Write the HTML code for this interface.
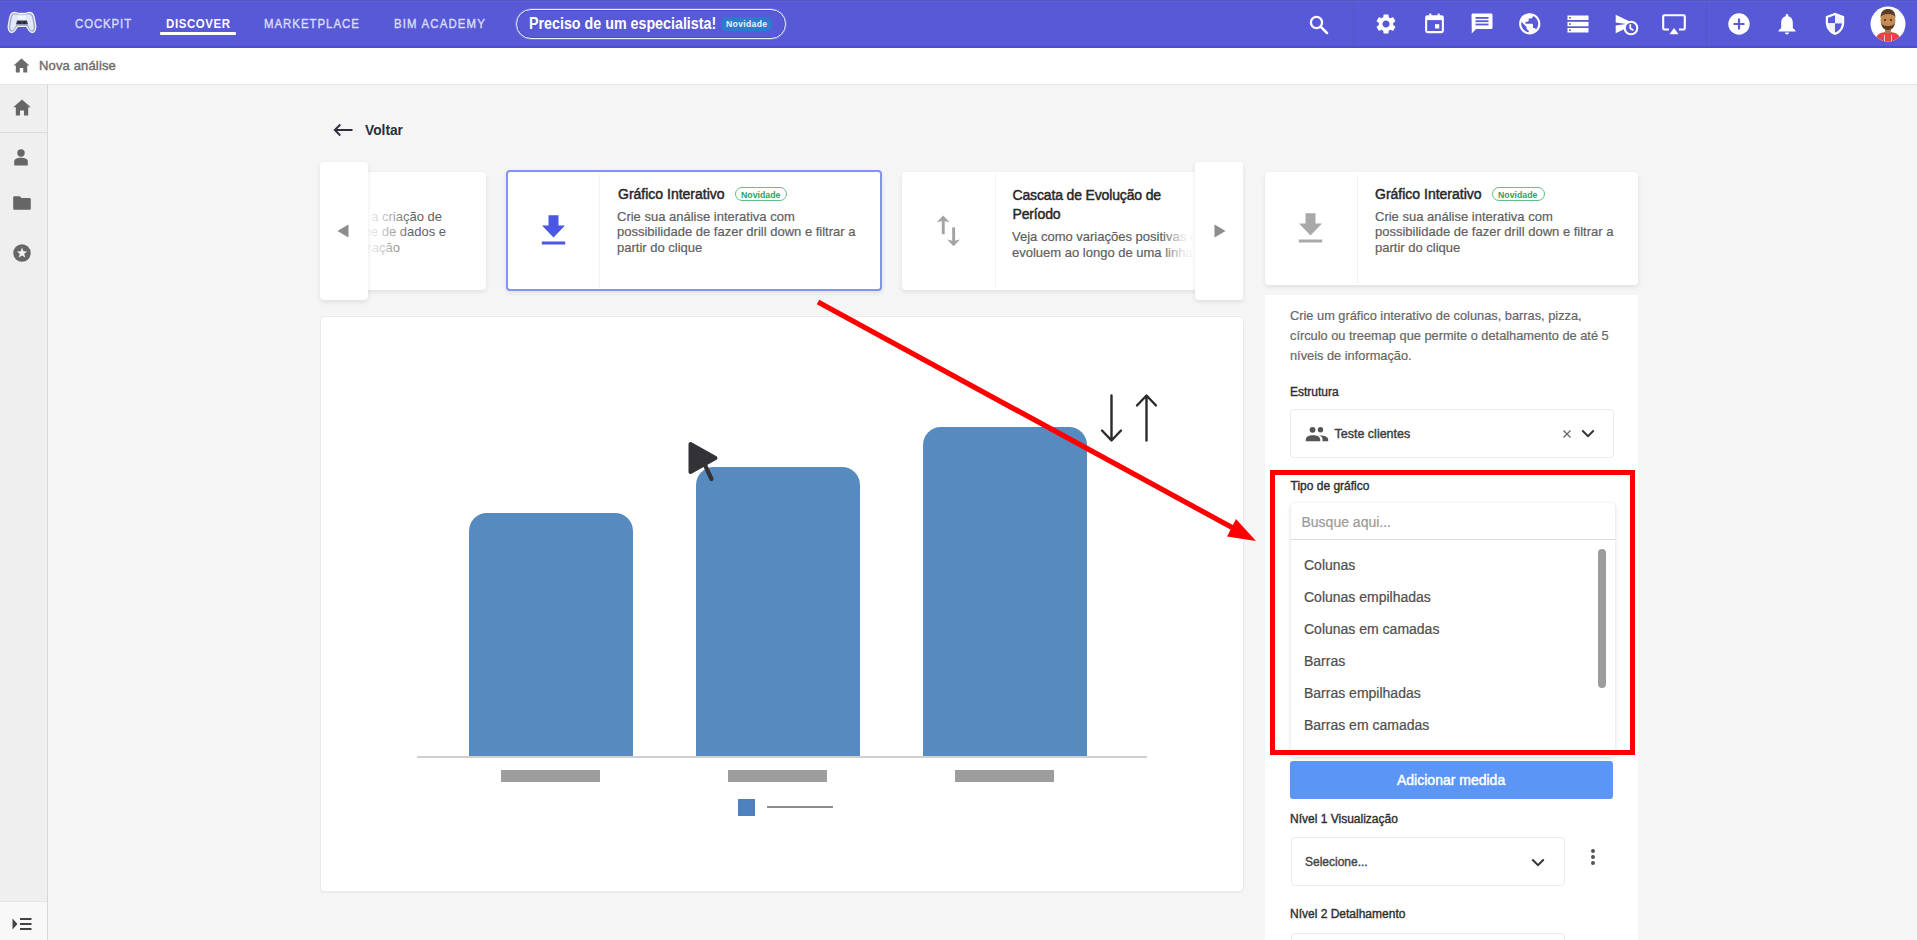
<!DOCTYPE html><html><head><meta charset="utf-8"><style>
html,body{margin:0;padding:0;width:1917px;height:940px;overflow:hidden;background:#f5f5f5;font-family:"Liberation Sans",sans-serif;}
.a{position:absolute;box-sizing:border-box;}
.t{white-space:nowrap;line-height:normal;}
svg{position:absolute;overflow:visible;}
</style></head><body>

<div class="a" style="left:0px;top:0px;width:1917px;height:48px;background:#5759d6;border-bottom:2px solid #4b4dcc;"></div>
<div class="a" style="left:0px;top:0px;width:1917px;height:1px;background:#5559bb;"></div>
<div class="a" style="left:0px;top:1px;width:1917px;height:1px;background:#5a60e4;"></div>
<div class="a" style="left:1353px;top:2px;width:1px;height:44px;background:#5456c2;"></div>
<div class="a" style="left:1706px;top:2px;width:1px;height:44px;background:#5456c2;"></div>
<svg style="left:7px;top:11px" width="30" height="23" viewBox="0 0 30 23">
<path d="M8 1.5 C5.5 1.5 3.8 3 3 5.5 L1.3 14.5 C0.8 18 2.2 21.5 4.8 21.5 C6.8 21.5 7.8 20 9 17.8 L10.5 15.3 L19.5 15.3 L21 17.8 C22.2 20 23.2 21.5 25.2 21.5 C27.8 21.5 29.2 18 28.7 14.5 L27 5.5 C26.2 3 24.5 1.5 22 1.5 C20.3 1.5 19.5 2.5 18 2.5 L12 2.5 C10.5 2.5 9.7 1.5 8 1.5 Z" fill="#9ba3c4" stroke="#eef0f6" stroke-width="1.3"/>
<path d="M8 3.5 C6.3 3.5 5.3 4.6 4.8 6.5 L3.3 14.8 C3 17.3 3.8 19.5 5 19.5 C6.2 19.5 7 18.3 8 16.6 L9.6 13.3 L20.4 13.3 L22 16.6 C23 18.3 23.8 19.5 25 19.5 C26.2 19.5 27 17.3 26.7 14.8 L25.2 6.5 C24.7 4.6 23.7 3.5 22 3.5 Z" fill="#e4e8fb"/>
<rect x="11.5" y="5" width="7" height="3.5" fill="#f5f7ff"/>
<path d="M10 9.5 L20 9.5 L21 13.3 L9 13.3 Z" fill="#3d4160"/>
<circle cx="12.5" cy="11.5" r="1.6" fill="#26293d"/><circle cx="17.5" cy="11.5" r="1.6" fill="#26293d"/>
</svg>
<div class="a t" style="left:75px;top:16.23px;font-size:13px;font-weight:normal;color:rgba(235,238,255,0.82);letter-spacing:1.0px;-webkit-text-stroke:0.42px rgba(235,238,255,0.82);transform:scaleX(0.88);transform-origin:0 0;">COCKPIT</div>
<div class="a t" style="left:166px;top:15.73px;font-size:13px;font-weight:bold;color:#ffffff;letter-spacing:0.7px;transform:scaleX(0.88);transform-origin:0 0;">DISCOVER</div>
<div class="a" style="left:160px;top:32px;width:76px;height:3px;background:#ffffff;border-radius:1px;"></div>
<div class="a t" style="left:264px;top:16.23px;font-size:13px;font-weight:normal;color:rgba(235,238,255,0.82);letter-spacing:1.1px;-webkit-text-stroke:0.42px rgba(235,238,255,0.82);transform:scaleX(0.88);transform-origin:0 0;">MARKETPLACE</div>
<div class="a t" style="left:394px;top:16.23px;font-size:13px;font-weight:normal;color:rgba(235,238,255,0.82);letter-spacing:1.3px;-webkit-text-stroke:0.42px rgba(235,238,255,0.82);transform:scaleX(0.88);transform-origin:0 0;">BIM ACADEMY</div>
<div class="a" style="left:516px;top:9px;width:270px;height:30px;border:1.7px solid #eef0ff;border-radius:16px;box-shadow:inset 0 0 0 1px #4b4dcf, 0 0 0 0.6px rgba(170,170,240,0.6);"></div>
<div class="a t" style="left:529px;top:14.37px;font-size:16.5px;font-weight:bold;color:#ffffff;transform:scaleX(0.865);transform-origin:0 0;">Preciso de um especialista!</div>
<div class="a" style="left:721px;top:17px;width:51px;height:14px;background:#2d7bcf;border-radius:5px;"></div>
<div class="a t" style="left:726px;top:18.82px;font-size:8.6px;font-weight:bold;color:#eef3ff;letter-spacing:0.35px;">Novidade</div>
<div class="a" style="left:0px;top:48px;width:1917px;height:37px;background:#ffffff;border-bottom:1px solid #e6e6e6;"></div>
<svg style="left:13px;top:58px" width="17" height="15" viewBox="0 0 17 15"><path d="M8.5 0.5 L0.5 7.5 L2.8 7.5 L2.8 14.5 L6.8 14.5 L6.8 10 L10.2 10 L10.2 14.5 L14.2 14.5 L14.2 7.5 L16.5 7.5 Z" fill="#6b6b6b"/></svg>
<div class="a t" style="left:39px;top:58.23px;font-size:13px;font-weight:normal;color:#6e6e6e;letter-spacing:0.15px;-webkit-text-stroke:0.42px #6e6e6e;">Nova análise</div>
<div class="a" style="left:0px;top:85px;width:48px;height:855px;background:#efefef;border-right:1px solid #d9d9d9;"></div>
<div class="a" style="left:0px;top:132px;width:47px;height:1px;background:#dddddd;"></div>
<div class="a" style="left:0px;top:901px;width:47px;height:39px;background:#f8f8f8;border-top:1px solid #e6e6e6;"></div>
<svg style="left:13px;top:99px" width="18" height="17" viewBox="0 0 18 17"><path d="M9 0.5 L0.3 8.3 L2.8 8.3 L2.8 16.5 L7 16.5 L7 11.5 L11 11.5 L11 16.5 L15.2 16.5 L15.2 8.3 L17.7 8.3 Z" fill="#666666"/></svg>
<svg style="left:14px;top:149px" width="14" height="17" viewBox="0 0 14 17"><circle cx="7" cy="4" r="3.7" fill="#666666"/><path d="M0.2 16.5 L0.2 12.5 C0.2 10 3 8.8 7 8.8 C11 8.8 13.8 10 13.8 12.5 L13.8 16.5 Z" fill="#666666"/></svg>
<svg style="left:13px;top:196px" width="18" height="14" viewBox="0 0 18 14"><path d="M1.5 0.3 L6.8 0.3 L8.5 2 L16.5 2 C17.3 2 17.8 2.6 17.8 3.4 L17.8 12.5 C17.8 13.3 17.3 13.8 16.5 13.8 L1.5 13.8 C0.7 13.8 0.2 13.3 0.2 12.5 L0.2 1.6 C0.2 0.8 0.7 0.3 1.5 0.3 Z" fill="#666666"/></svg>
<svg style="left:13px;top:244px" width="18" height="18" viewBox="0 0 18 18"><circle cx="9" cy="9" r="8.7" fill="#666666"/><path d="M9 3.6 L10.4 7.3 L14.2 7.4 L11.2 9.8 L12.3 13.6 L9 11.4 L5.7 13.6 L6.8 9.8 L3.8 7.4 L7.6 7.3 Z" fill="#f2f2f2"/></svg>
<svg style="left:12px;top:917px" width="20" height="14" viewBox="0 0 20 14"><path d="M0.5 1.5 L5.5 7 L0.5 12.5 Z" fill="#444"/><rect x="8" y="1" width="11.5" height="2" fill="#444"/><rect x="8" y="6" width="11.5" height="2" fill="#444"/><rect x="8" y="11" width="11.5" height="2" fill="#444"/></svg>
<svg style="left:1309px;top:15px" width="20" height="20" viewBox="0 0 20 20"><circle cx="7.5" cy="7.5" r="5.6" fill="none" stroke="#ffffff" stroke-width="2.3"/><path d="M11.6 11.6 L18 18" stroke="#ffffff" stroke-width="2.5" stroke-linecap="round"/></svg>
<svg style="left:1374px;top:12px" width="24" height="24" viewBox="0 0 24 24"><path fill="#ffffff" d="M19.14 12.94c.04-.3.06-.61.06-.94 0-.32-.02-.64-.07-.94l2.03-1.58c.18-.14.23-.41.12-.61l-1.92-3.32c-.12-.22-.37-.29-.59-.22l-2.39.96c-.5-.38-1.03-.7-1.62-.94l-.36-2.54c-.04-.24-.24-.41-.48-.41h-3.84c-.24 0-.43.17-.47.41l-.36 2.54c-.59.24-1.13.57-1.62.94l-2.39-.96c-.22-.08-.47 0-.59.22L2.74 8.87c-.12.21-.08.47.12.61l2.03 1.58c-.05.3-.09.63-.09.94s.02.64.07.94l-2.03 1.58c-.18.14-.23.41-.12.61l1.92 3.32c.12.22.37.29.59.22l2.39-.96c.5.38 1.03.7 1.62.94l.36 2.54c.05.24.24.41.48.41h3.84c.24 0 .44-.17.47-.41l.36-2.54c.59-.24 1.13-.56 1.62-.94l2.39.96c.22.08.47 0 .59-.22l1.92-3.32c.12-.22.07-.47-.12-.61l-2.01-1.58zM12 15.6c-1.98 0-3.6-1.62-3.6-3.6s1.62-3.6 3.6-3.6 3.6 1.62 3.6 3.6-1.62 3.6-3.6 3.6z"/></svg>
<svg style="left:1424.5px;top:13px" width="19" height="20.5" viewBox="0 0 20 21"><rect x="1.2" y="3.2" width="17.6" height="16.6" rx="1.5" fill="none" stroke="#ffffff" stroke-width="2.2"/><rect x="1.2" y="3.2" width="17.6" height="4" fill="#ffffff"/><rect x="4.5" y="0.3" width="2.2" height="4" fill="#ffffff"/><rect x="13.3" y="0.3" width="2.2" height="4" fill="#ffffff"/><rect x="10.5" y="11.5" width="4.5" height="4.5" fill="#ffffff"/></svg>
<svg style="left:1471px;top:13px" width="22" height="21" viewBox="0 0 22 21"><path d="M2 0.5 L20 0.5 C21 0.5 21.5 1 21.5 2 L21.5 14.5 C21.5 15.5 21 16 20 16 L5 16 L0.8 20.5 L0.5 2 C0.5 1 1 0.5 2 0.5 Z" fill="#ffffff"/><rect x="4.5" y="4" width="13" height="1.8" fill="#5759d6"/><rect x="4.5" y="7.3" width="13" height="1.8" fill="#5759d6"/><rect x="4.5" y="10.6" width="13" height="1.8" fill="#5759d6"/></svg>
<svg style="left:1517px;top:11px" width="25.5" height="25.5" viewBox="0 0 24 24"><path fill="#ffffff" d="M12 2C6.48 2 2 6.48 2 12s4.48 10 10 10 10-4.48 10-10S17.52 2 12 2zm-1 17.93c-3.95-.49-7-3.85-7-7.93 0-.62.08-1.21.21-1.79L9 15v1c0 1.1.9 2 2 2v1.93zm6.9-2.54c-.26-.81-1-1.39-1.9-1.39h-1v-3c0-.55-.45-1-1-1H8v-2h2c.55 0 1-.45 1-1V7h2c1.1 0 2-.9 2-2v-.41c2.93 1.19 5 4.06 5 7.41 0 2.08-.8 3.97-2.1 5.39z"/></svg>
<svg style="left:1567px;top:15px" width="22" height="18" viewBox="0 0 22 18"><rect x="0.5" y="0.5" width="21" height="4.5" fill="#ffffff"/><rect x="0.5" y="6.8" width="21" height="4.5" fill="#ffffff"/><rect x="0.5" y="13" width="21" height="4.5" fill="#ffffff"/><rect x="2" y="2" width="1.8" height="1.5" fill="#5759d6"/><rect x="2" y="8.3" width="1.8" height="1.5" fill="#5759d6"/><rect x="2" y="14.5" width="1.8" height="1.5" fill="#5759d6"/></svg>
<svg style="left:1615px;top:14px" width="24" height="22" viewBox="0 0 24 22"><path d="M0.7 0.8 L20 10 L0.7 19.3 L0.7 11.6 L11 10 L0.7 8.4 Z" fill="#ffffff"/><circle cx="16" cy="14" r="6.3" fill="#5759d6" stroke="#ffffff" stroke-width="2.1"/><path d="M15.3 10.2 L15.3 14.3 L18.3 16.3" fill="none" stroke="#ffffff" stroke-width="1.7"/></svg>
<svg style="left:1662px;top:14px" width="24" height="21" viewBox="0 0 24 21"><path d="M7 15.5 L2.5 15.5 C1.6 15.5 1.2 15 1.2 14 L1.2 2.5 C1.2 1.6 1.6 1.2 2.5 1.2 L21.5 1.2 C22.4 1.2 22.8 1.6 22.8 2.5 L22.8 14 C22.8 15 22.4 15.5 21.5 15.5 L17 15.5" fill="none" stroke="#ffffff" stroke-width="2.1"/><path d="M12 14 L16.5 20.3 L7.5 20.3 Z" fill="#ffffff"/></svg>
<svg style="left:1728px;top:13px" width="22" height="22" viewBox="0 0 22 22"><circle cx="11" cy="11" r="10.7" fill="#ffffff"/><path d="M11 5.5 L11 16.5 M5.5 11 L16.5 11" stroke="#5759d6" stroke-width="2.2"/></svg>
<svg style="left:1778px;top:13px" width="18" height="22" viewBox="0 0 18 22"><path d="M9 1 C9.8 1 10.3 1.6 10.3 2.4 L10.3 3.2 C13.2 3.9 14.8 6.3 14.8 9.3 L14.8 15 L17.5 17.6 L17.5 18.5 L0.5 18.5 L0.5 17.6 L3.2 15 L3.2 9.3 C3.2 6.3 4.8 3.9 7.7 3.2 L7.7 2.4 C7.7 1.6 8.2 1 9 1 Z" fill="#ffffff"/><path d="M7 19.5 L11 19.5 C11 20.7 10.1 21.5 9 21.5 C7.9 21.5 7 20.7 7 19.5 Z" fill="#ffffff"/></svg>
<svg style="left:1825px;top:12px" width="20" height="24" viewBox="0 0 20 24"><path d="M10 0.8 L19.2 4.3 L19.2 10.5 C19.2 16.5 15.3 21.3 10 23 C4.7 21.3 0.8 16.5 0.8 10.5 L0.8 4.3 Z" fill="#ffffff"/><path d="M10 3.2 L10 11.2 L3 11.2 L3 5.8 Z" fill="#5759d6"/><path d="M10 11.2 L16.9 11.2 C16.5 15.8 13.8 19.2 10 20.6 Z" fill="#5759d6"/><path d="M10 3.2 L17 5.8 L17 11.2 L10 11.2 Z" fill="#eef0fb"/><path d="M3 11.2 L10 11.2 L10 20.6 C6.2 19.2 3.4 15.8 3 11.2 Z" fill="#eef0fb"/></svg>
<svg style="left:1870px;top:6px" width="36" height="36" viewBox="0 0 36 36">
<defs><clipPath id="avc"><circle cx="18" cy="18" r="17.5"/></clipPath></defs>
<circle cx="18" cy="18" r="17.5" fill="#ffffff"/>
<g clip-path="url(#avc)">
<path d="M5 36 C6 28 10 26 18 26 C26 26 30 28 31 36 Z" fill="#e8424a"/>
<rect x="15" y="22" width="6" height="5" fill="#b87a4b"/>
<ellipse cx="18" cy="14.5" rx="7.5" ry="9" fill="#c68a55"/>
<path d="M10.5 12 C10.5 5 14 3 18 3 C22 3 25.5 5 25.5 12 C24.5 9 22 8 18 8 C14 8 11.5 9 10.5 12 Z" fill="#5a3d26"/>
<path d="M11 17 C12 22 14.5 24 18 24 C21.5 24 24 22 25 17 C24 19 22 20 18 20 C14 20 12 19 11 17 Z" fill="#5a3d26"/>
<circle cx="15" cy="14" r="0.9" fill="#2a1a10"/><circle cx="21" cy="14" r="0.9" fill="#2a1a10"/>
<rect x="14" y="29" width="1" height="7" fill="#fff" opacity="0.7"/><rect x="21" y="29" width="1" height="7" fill="#fff" opacity="0.7"/>
</g></svg>
<svg style="left:333px;top:123px" width="21" height="14" viewBox="0 0 21 14"><path d="M19.5 7 L2 7 M7.3 1.5 L1.8 7 L7.3 12.5" fill="none" stroke="#2e3040" stroke-width="1.9"/></svg>
<div class="a t" style="left:365px;top:122.11px;font-size:14.8px;font-weight:bold;color:#2b2d3a;transform:scaleX(0.93);transform-origin:0 0;">Voltar</div>
<div class="a" style="left:360px;top:172px;width:126px;height:118px;background:#fff;border-radius:4px;box-shadow:0 2px 5px rgba(0,0,0,0.09);"></div>
<div class="a t" style="right:1475px;top:208.54px;font-size:13px;color:#5f5f5f">Permite a criação de</div>
<div class="a t" style="right:1471px;top:224.44px;font-size:13px;color:#5f5f5f">volume de dados e</div>
<div class="a t" style="right:1517px;top:240.13px;font-size:13px;color:#5f5f5f">visualização</div>
<div class="a" style="left:360px;top:174px;width:8px;height:114px;background:#fff;"></div>
<div class="a" style="left:368px;top:174px;width:44px;height:114px;background:linear-gradient(to right,rgba(255,255,255,0.95) 0%,rgba(255,255,255,0.6) 40%,rgba(255,255,255,0) 100%);"></div>
<div class="a" style="left:320px;top:162px;width:48px;height:138px;background:#fff;border-radius:4px;box-shadow:0 2px 5px rgba(0,0,0,0.09);"></div>
<svg style="left:337px;top:224px" width="12" height="14" viewBox="0 0 12 14"><path d="M11.5 0.5 L11.5 13.5 L0.5 7 Z" fill="#8c8c8c"/></svg>
<div class="a" style="left:506px;top:170px;width:376px;height:121.19999999999999px;background:#fff;border:2px solid #8393f3;border-radius:4px;box-shadow:0 2px 5px rgba(0,0,0,0.09);"></div>
<div class="a" style="left:599px;top:174px;width:1px;height:114px;background:#f3f3f3;"></div>
<svg style="left:541px;top:215px" width="25" height="30" viewBox="0 0 25 30"><path d="M7.5 0.3 L17.5 0.3 L17.5 10.5 L24 10.5 L12.5 22.5 L1 10.5 L7.5 10.5 Z" fill="#4b57e3"/><rect x="0.8" y="26.5" width="23.4" height="3" fill="#4b57e3"/></svg>
<div class="a t" style="left:618px;top:186.03px;font-size:14px;font-weight:normal;color:#262626;-webkit-text-stroke:0.45px #262626;">Gráfico Interativo</div>
<div class="a" style="left:735px;top:187px;width:52px;height:14px;border:1.5px solid #63bd84;border-radius:7px;background:#fff;"></div>
<div class="a t" style="left:740.5px;top:189.20px;font-size:9.5px;font-weight:bold;color:#3a9a5e;transform:scaleX(0.92);transform-origin:0 0;">Novidade</div>
<div class="a t" style="left:617px;top:208.54px;font-size:13px;font-weight:normal;color:#5f5f5f;-webkit-text-stroke:0.21px #5f5f5f;">Crie sua análise interativa com</div>
<div class="a t" style="left:617px;top:224.34px;font-size:13px;font-weight:normal;color:#5f5f5f;-webkit-text-stroke:0.21px #5f5f5f;">possibilidade de fazer drill down e filtrar a</div>
<div class="a t" style="left:617px;top:240.13px;font-size:13px;font-weight:normal;color:#5f5f5f;-webkit-text-stroke:0.21px #5f5f5f;">partir do clique</div>
<div class="a" style="left:902px;top:172px;width:313px;height:118px;background:#fff;border-radius:4px;box-shadow:0 2px 5px rgba(0,0,0,0.09);"></div>
<div class="a" style="left:995px;top:174px;width:1px;height:114px;background:#f4f4f4;"></div>
<svg style="left:0;top:0" width="1917" height="940" viewBox="0 0 1917 940"><path d="M943.2 215.4 L936.8 222.3 L943.2 220.8 L949.6 222.3 Z" fill="#a3a3a3"/><rect x="941.8" y="219" width="2.9" height="15.2" fill="#a3a3a3"/><path d="M953.6 246.2 L947.2 239.4 L953.6 240.9 L960 239.4 Z" fill="#a3a3a3"/><rect x="952.2" y="227.4" width="2.9" height="15" fill="#a3a3a3"/></svg>
<div class="a t" style="left:1012.5px;top:186.63px;font-size:14px;font-weight:normal;color:#262626;letter-spacing:-0.15px;-webkit-text-stroke:0.45px #262626;">Cascata de Evolução de</div>
<div class="a t" style="left:1012.5px;top:206.23px;font-size:14px;font-weight:normal;color:#262626;letter-spacing:-0.15px;-webkit-text-stroke:0.45px #262626;">Período</div>
<div class="a t" style="left:1012px;top:229.24px;font-size:13px;font-weight:normal;color:#5f5f5f;-webkit-text-stroke:0.21px #5f5f5f;">Veja como variações positivas e</div>
<div class="a t" style="left:1012px;top:245.04px;font-size:13px;font-weight:normal;color:#5f5f5f;-webkit-text-stroke:0.21px #5f5f5f;">evoluem ao longo de uma linha de</div>
<div class="a" style="left:1162px;top:174px;width:33px;height:114px;background:linear-gradient(to right,rgba(255,255,255,0) 0%,rgba(255,255,255,0.8) 60%,#ffffff 100%);"></div>
<div class="a" style="left:1195px;top:162px;width:48px;height:138px;background:#fff;border-radius:4px;box-shadow:0 2px 5px rgba(0,0,0,0.09);"></div>
<svg style="left:1214px;top:224px" width="12" height="14" viewBox="0 0 12 14"><path d="M0.5 0.5 L0.5 13.5 L11.5 7 Z" fill="#8c8c8c"/></svg>
<div class="a" style="left:320px;top:316px;width:924px;height:576px;background:#fff;border:1px solid #eaeaea;border-radius:4px;box-shadow:0 1px 1px rgba(0,0,0,0.04);"></div>
<div class="a" style="left:469px;top:513px;width:164px;height:244px;background:#578bbf;border-radius:18px 18px 0 0;"></div>
<div class="a" style="left:696px;top:467px;width:164px;height:290px;background:#578bbf;border-radius:18px 18px 0 0;"></div>
<div class="a" style="left:923px;top:427px;width:164px;height:330px;background:#578bbf;border-radius:18px 18px 0 0;"></div>
<div class="a" style="left:417px;top:756px;width:730px;height:2px;background:#cfcfcf;"></div>
<div class="a" style="left:501px;top:769.5px;width:99px;height:12.0px;background:#9d9d9d;"></div>
<div class="a" style="left:728px;top:769.5px;width:99px;height:12.0px;background:#9d9d9d;"></div>
<div class="a" style="left:955px;top:769.5px;width:99px;height:12.0px;background:#9d9d9d;"></div>
<div class="a" style="left:738px;top:799px;width:17px;height:17px;background:#4d80c0;"></div>
<div class="a" style="left:767px;top:806px;width:66px;height:2px;background:#8c8c8c;"></div>
<svg style="left:0;top:0" width="1917" height="940" viewBox="0 0 1917 940"><path d="M690.5 444 L715.5 458 L690.5 472 Z" fill="#333337" stroke="#333337" stroke-width="4" stroke-linejoin="round"/><path d="M704 463 L711.5 479" stroke="#333337" stroke-width="4.2" stroke-linecap="round"/></svg>
<svg style="left:1100px;top:393px" width="60" height="50" viewBox="0 0 60 50"><path d="M11.5 2.5 L11.5 47 M2 37.5 L11.5 47.5 L21 37.5" fill="none" stroke="#2b2b2b" stroke-width="2.4" stroke-linecap="round" stroke-linejoin="round"/><path d="M46.5 47.5 L46.5 3 M37 12.5 L46.5 2.5 L56 12.5" fill="none" stroke="#2b2b2b" stroke-width="2.4" stroke-linecap="round" stroke-linejoin="round"/></svg>
<div class="a" style="left:1265px;top:172px;width:373px;height:113px;background:#fff;border-radius:4px;box-shadow:0 2px 5px rgba(0,0,0,0.09);"></div>
<div class="a" style="left:1357px;top:174px;width:1px;height:109px;background:#f3f3f3;"></div>
<svg style="left:1298px;top:213px" width="25" height="30" viewBox="0 0 25 30"><path d="M7.5 0.3 L17.5 0.3 L17.5 10.5 L24 10.5 L12.5 22.5 L1 10.5 L7.5 10.5 Z" fill="#a9a9a9"/><rect x="0.8" y="26.5" width="23.4" height="3" fill="#a9a9a9"/></svg>
<div class="a t" style="left:1375px;top:186.33px;font-size:14px;font-weight:normal;color:#262626;-webkit-text-stroke:0.45px #262626;">Gráfico Interativo</div>
<div class="a" style="left:1492px;top:187px;width:53px;height:14px;border:1.5px solid #63bd84;border-radius:7px;background:#fff;"></div>
<div class="a t" style="left:1497.5px;top:189.20px;font-size:9.5px;font-weight:bold;color:#3a9a5e;transform:scaleX(0.92);transform-origin:0 0;">Novidade</div>
<div class="a t" style="left:1375px;top:208.54px;font-size:13px;font-weight:normal;color:#5f5f5f;-webkit-text-stroke:0.21px #5f5f5f;">Crie sua análise interativa com</div>
<div class="a t" style="left:1375px;top:224.34px;font-size:13px;font-weight:normal;color:#5f5f5f;-webkit-text-stroke:0.21px #5f5f5f;">possibilidade de fazer drill down e filtrar a</div>
<div class="a t" style="left:1375px;top:240.13px;font-size:13px;font-weight:normal;color:#5f5f5f;-webkit-text-stroke:0.21px #5f5f5f;">partir do clique</div>
<div class="a" style="left:1265px;top:295px;width:373px;height:645px;background:#fff;"></div>
<div class="a t" style="left:1290px;top:307.92px;font-size:12.8px;font-weight:normal;color:#666;-webkit-text-stroke:0.20px #666;">Crie um gráfico interativo de colunas, barras, pizza,</div>
<div class="a t" style="left:1290px;top:327.82px;font-size:12.8px;font-weight:normal;color:#666;-webkit-text-stroke:0.20px #666;">círculo ou treemap que permite o detalhamento de até 5</div>
<div class="a t" style="left:1290px;top:347.72px;font-size:12.8px;font-weight:normal;color:#666;-webkit-text-stroke:0.20px #666;">níveis de informação.</div>
<div class="a t" style="left:1290px;top:384.64px;font-size:12px;font-weight:normal;color:#2e2e2e;-webkit-text-stroke:0.38px #2e2e2e;">Estrutura</div>
<div class="a" style="left:1290px;top:409px;width:324px;height:49px;border:1px solid #ebebeb;border-radius:4px;"></div>
<svg style="left:1305px;top:426px" width="24" height="16" viewBox="0 0 24 16"><circle cx="7.5" cy="3.8" r="2.9" fill="#555"/><circle cx="15.5" cy="3.8" r="2.7" fill="#555"/><path d="M0.8 15.3 L0.8 13.5 C0.8 10.8 4 9.3 8 9.3 C12 9.3 15.2 10.8 15.2 13.5 L15.2 15.3 Z" fill="#555"/><path d="M14.2 9.4 C19.2 9.2 23.2 10.8 23.2 13.3 L23.2 15.3 L17.5 15.3 L17.5 13.3 C17.5 11.5 16.5 10.3 14.2 9.4 Z" fill="#555"/></svg>
<div class="a t" style="left:1334.5px;top:427.09px;font-size:12.5px;font-weight:normal;color:#3c3c3c;-webkit-text-stroke:0.40px #3c3c3c;">Teste clientes</div>
<svg style="left:1562px;top:429px" width="10" height="10" viewBox="0 0 10 10"><path d="M1.5 1.5 L8.5 8.5 M8.5 1.5 L1.5 8.5" stroke="#666" stroke-width="1.3"/></svg>
<svg style="left:1581px;top:429px" width="14" height="9" viewBox="0 0 14 9"><path d="M1.3 1.5 L7 7.2 L12.7 1.5" fill="none" stroke="#333" stroke-width="2"/></svg>
<div class="a t" style="left:1290.5px;top:478.54px;font-size:12px;font-weight:normal;color:#2e2e2e;-webkit-text-stroke:0.38px #2e2e2e;">Tipo de gráfico</div>
<div class="a" style="left:1291px;top:503px;width:324px;height:254px;background:#fff;border-radius:4px;box-shadow:0 1px 4px rgba(0,0,0,0.16);"></div>
<div class="a" style="left:1291px;top:539px;width:324px;height:1px;background:#dcdcdc;"></div>
<div class="a t" style="left:1301.5px;top:514.33px;font-size:14px;font-weight:normal;color:#9b9b9b;-webkit-text-stroke:0.22px #9b9b9b;">Busque aqui...</div>
<div class="a t" style="left:1304px;top:557.33px;font-size:14px;font-weight:normal;color:#4f4f4f;-webkit-text-stroke:0.22px #4f4f4f;">Colunas</div>
<div class="a t" style="left:1304px;top:589.33px;font-size:14px;font-weight:normal;color:#4f4f4f;-webkit-text-stroke:0.22px #4f4f4f;">Colunas empilhadas</div>
<div class="a t" style="left:1304px;top:621.33px;font-size:14px;font-weight:normal;color:#4f4f4f;-webkit-text-stroke:0.22px #4f4f4f;">Colunas em camadas</div>
<div class="a t" style="left:1304px;top:653.33px;font-size:14px;font-weight:normal;color:#4f4f4f;-webkit-text-stroke:0.22px #4f4f4f;">Barras</div>
<div class="a t" style="left:1304px;top:685.33px;font-size:14px;font-weight:normal;color:#4f4f4f;-webkit-text-stroke:0.22px #4f4f4f;">Barras empilhadas</div>
<div class="a t" style="left:1304px;top:717.33px;font-size:14px;font-weight:normal;color:#4f4f4f;-webkit-text-stroke:0.22px #4f4f4f;">Barras em camadas</div>
<div class="a" style="left:1598px;top:549px;width:8px;height:139px;background:#9c9c9c;border-radius:4px;"></div>
<div class="a" style="left:1270px;top:470.2px;width:364.79999999999995px;height:284.59999999999997px;border:5.5px solid #ff0000;"></div>
<div class="a" style="left:1290px;top:761px;width:323px;height:37.5px;background:#5b95f6;border-radius:3px;"></div>
<div class="a t" style="left:1397px;top:772.33px;font-size:14px;font-weight:normal;color:#ffffff;-webkit-text-stroke:0.45px #ffffff;">Adicionar medida</div>
<div class="a t" style="left:1290px;top:812.14px;font-size:12px;font-weight:normal;color:#2e2e2e;-webkit-text-stroke:0.38px #2e2e2e;">Nível 1 Visualização</div>
<div class="a" style="left:1290.5px;top:837px;width:274.5px;height:49px;border:1px solid #ebebeb;border-radius:4px;"></div>
<div class="a t" style="left:1305px;top:855.14px;font-size:12px;font-weight:normal;color:#444;-webkit-text-stroke:0.38px #444;">Selecione...</div>
<svg style="left:1531px;top:858px" width="14" height="9" viewBox="0 0 14 9"><path d="M1.3 1.5 L7 7.2 L12.7 1.5" fill="none" stroke="#333" stroke-width="2"/></svg>
<div class="a" style="left:1591px;top:849.1px;width:3.8px;height:3.8px;border-radius:50%;background:#555"></div>
<div class="a" style="left:1591px;top:855.1px;width:3.8px;height:3.8px;border-radius:50%;background:#555"></div>
<div class="a" style="left:1591px;top:861.1px;width:3.8px;height:3.8px;border-radius:50%;background:#555"></div>
<div class="a t" style="left:1290px;top:906.64px;font-size:12px;font-weight:normal;color:#2e2e2e;-webkit-text-stroke:0.38px #2e2e2e;">Nível 2 Detalhamento</div>
<div class="a" style="left:1290.5px;top:932.5px;width:274.5px;height:27.5px;border:1px solid #ebebeb;border-radius:4px;"></div>
<svg style="left:0;top:0" width="1917" height="940" viewBox="0 0 1917 940"><path d="M818 302 L1233 528" stroke="#ff0000" stroke-width="5.2"/><path d="M1236 519 L1227 536.5 L1256 541 Z" fill="#ff0000"/></svg>
</body></html>
